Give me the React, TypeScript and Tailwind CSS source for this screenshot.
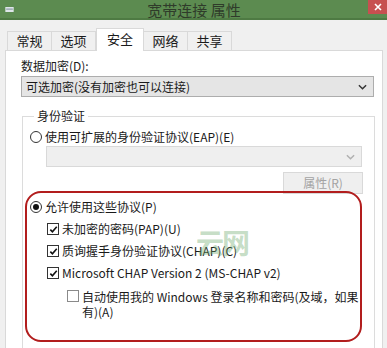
import React from "react";

// --- Small controls ---

const Chevron = ({ color }: { color: string }) => (
  <svg viewBox="0 0 10 6" className="h-[6px] w-[9px]" fill="none" stroke={color} strokeWidth={1.6}>
    <path d="M1 1l4 4 4-4" />
  </svg>
);

const Radio = ({ checked }: { checked?: boolean }) => (
  <span className="flex h-[12px] w-[12px] shrink-0 items-center justify-center rounded-full border border-[#333] bg-white">
    {checked && <span className="h-[6px] w-[6px] rounded-full bg-[#111]" />}
  </span>
);

const Checkbox = ({ checked }: { checked?: boolean }) => (
  <span
    className={
      checked
        ? "flex h-[12px] w-[12px] shrink-0 items-center justify-center border border-[#333] bg-white"
        : "flex h-[12px] w-[12px] shrink-0 items-center justify-center border border-[#8a8a8a] bg-white"
    }
  >
    {checked && (
      <svg viewBox="0 0 10 10" className="h-[9px] w-[9px]" fill="none" stroke="#111" strokeWidth={1.8}>
        <path d="M1.5 5.2l2.3 2.4L8.6 2" />
      </svg>
    )}
  </span>
);

const TABS = ["常规", "选项", "安全", "网络", "共享"];

export default function App() {
  return (
    <div
      className="relative flex h-[348px] w-[387px] flex-col overflow-hidden bg-[#f0f0f0] text-[12px] text-[#1a1a1a]"
      style={{ fontFamily: '"Noto Sans CJK SC", "Noto Sans", sans-serif' }}
    >
      {/* Title bar */}
      <div className="flex h-[20px] shrink-0 items-start border-b-2 border-[#4e7a43] bg-[#5c8b50]">
        <div className="flex h-[18px] w-[14px] items-center justify-end">
          <svg viewBox="0 0 10 6" className="h-[5px] w-[9px]">
            <rect x="0" y="0" width="10" height="6" fill="#dfe6ea" />
            <rect x="1" y="2" width="8" height="1" fill="#6a7c86" />
          </svg>
        </div>
        <div className="flex h-[18px] flex-1 items-center justify-center pl-[6px] text-[15px] leading-none text-[#2f3b2a]">
          宽带连接 属性
        </div>
        <div className="flex h-[14px] w-[19px] items-center justify-center bg-[#c75050]">
          <svg viewBox="0 0 8 8" className="h-[8px] w-[8px]" fill="none" stroke="#fff" strokeWidth={1.6}>
            <path d="M1 1l6 6M7 1L1 7" />
          </svg>
        </div>
      </div>

      {/* Tabs */}
      <div className="mt-[8px] flex h-[22px] shrink-0 items-end pl-[7px]">
        {TABS.map((t) =>
          t === "安全" ? (
            <div
              key={t}
              className="relative z-10 -mb-px flex h-[23px] w-[48px] items-center justify-center border border-b-0 border-[#d9d9d9] bg-white pb-[2px] text-[13px]"
            >
              {t}
            </div>
          ) : (
            <div
              key={t}
              className="-ml-px flex h-[19px] w-[45px] items-center justify-center border border-b-0 border-[#d9d9d9] bg-[#f0f0f0] text-[13px] first:ml-0"
            >
              {t}
            </div>
          )
        )}
      </div>

      {/* Panel */}
      <div className="ml-[5px] w-[378px] flex-1 border border-[#d9d9d9] bg-white pl-[15px] pt-[7px]">
        <div className="h-[16px] leading-[16px]">数据加密(D):</div>
        <div className="mt-[2px] flex h-[21px] w-[353px] items-center justify-between border border-[#adadad] bg-[#e5e5e5] pl-[4px] pr-[6px]">
          <span>可选加密(没有加密也可以连接)</span>
          <Chevron color="#333" />
        </div>

        <fieldset className="ml-px mt-[11px] w-[353px] border border-[#dcdcdc] pb-[20px] pl-[7px]">
          <legend className="ml-[4px] px-[3px] leading-[16px]">身份验证</legend>

          <div className="mt-[5px] flex h-[16px] items-center gap-[3px]">
            <Radio />
            <span>使用可扩展的身份验证协议(EAP)(E)</span>
          </div>
          <div className="ml-[16px] mt-px flex h-[21px] w-[316px] items-center justify-end border border-[#d9d9d9] bg-[#efefef] pr-[6px]">
            <Chevron color="#b0b0b0" />
          </div>
          <div className="mt-[5px] flex w-[333px] justify-end">
            <div className="flex h-[22px] w-[80px] items-center justify-center border border-[#d9d9d9] bg-[#efefef] text-[#a3a3a3]">
              属性(R)
            </div>
          </div>

          {/* highlighted protocol list */}
          <div className="relative -ml-[5px] -mt-[3px] h-[151px] w-[337px] rounded-[16px] border-2 border-[#b21d1d] pl-[3px] pt-[6px]">
            <div className="flex h-[16px] items-center gap-[3px]">
              <Radio checked />
              <span>允许使用这些协议(P)</span>
            </div>
            <div className="ml-[17px] mt-[6px] flex h-[16px] items-center gap-[3px]">
              <Checkbox checked />
              <span>未加密的密码(PAP)(U)</span>
            </div>
            <div className="ml-[17px] mt-[6px] flex h-[16px] items-center gap-[3px]">
              <Checkbox checked />
              <span>质询握手身份验证协议(CHAP)(C)</span>
            </div>
            <div className="ml-[17px] mt-[6px] flex h-[16px] items-center gap-[3px]">
              <Checkbox checked />
              <span>Microsoft CHAP Version 2 (MS-CHAP v2)</span>
            </div>
            <div className="ml-[37px] mt-[8px] flex items-start gap-[3px]">
              <span className="mt-[1px]">
                <Checkbox />
              </span>
              <span className="leading-[15px]">
                自动使用我的 Windows 登录名称和密码(及域，如果
                <br />
                有)(A)
              </span>
            </div>
          </div>
        </fieldset>
      </div>

      {/* watermark */}
      <div className="pointer-events-none absolute left-[196px] top-[228px] text-[28px] font-bold leading-none tracking-[-2px] text-[#6aa86a]/40">
        云网
      </div>
    </div>
  );
}
